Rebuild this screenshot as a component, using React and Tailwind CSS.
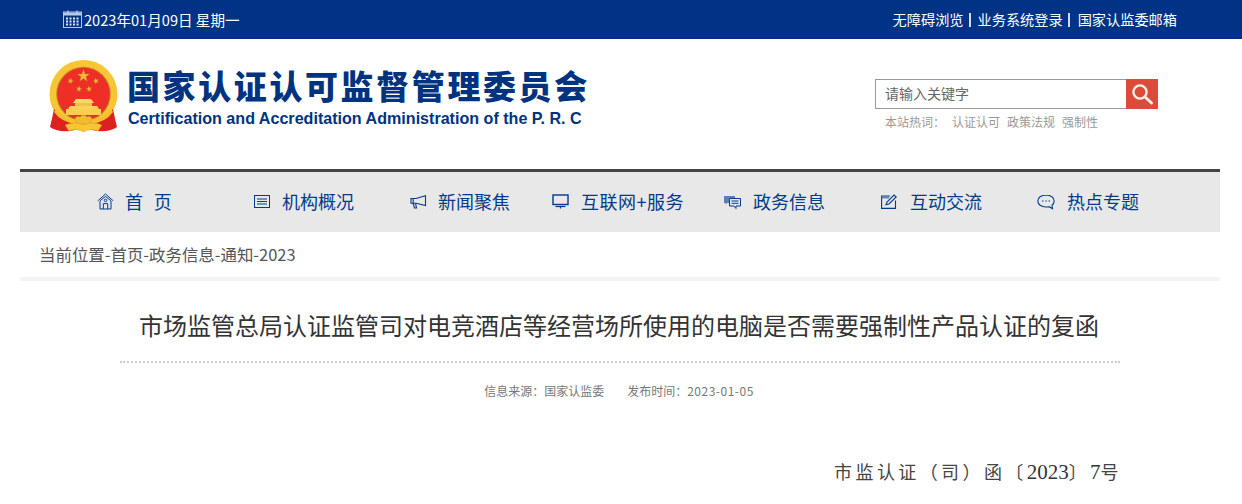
import React from "react";

function Emblem() {
  const star = (cx, cy, r, rot = 0) => {
    const pts = [];
    for (let i = 0; i < 10; i++) {
      const a = (Math.PI / 5) * i - Math.PI / 2 + rot;
      const rr = i % 2 === 0 ? r : r * 0.4;
      pts.push(`${(cx + rr * Math.cos(a)).toFixed(2)},${(cy + rr * Math.sin(a)).toFixed(2)}`);
    }
    return <polygon points={pts.join(" ")} fill="#f5b83a" stroke="#b9791c" strokeWidth="0.3" />;
  };
  return (
    <svg width="72" height="76" viewBox="0 0 72 76" className="shrink-0">
      <circle cx="35.5" cy="35" r="34" fill="#f8c534" />
      <circle cx="35.5" cy="35" r="27.3" fill="#c08a22" />
      <circle cx="35.5" cy="35" r="26.3" fill="#ee2f27" />
      {star(35.5, 17, 6.5)}
      {star(22.5, 22, 3.2, 0.3)}
      {star(48, 22, 3.2, -0.3)}
      {star(31, 30, 3.2, 0.2)}
      {star(41, 30, 3.2, -0.2)}
      <path d="M28 40 L43 40 L46 44 L25 44 Z" fill="#fbd768" />
      <rect x="27" y="44" width="17" height="3" fill="#f2c14a" />
      <path d="M22 47 H49 L51 50 H20 Z" fill="#fbd35a" />
      <rect x="18" y="50" width="35" height="6" fill="#fbcf4e" />
      <path d="M6 50 Q4 60 2 68 Q8 73 22 72 L31 70 L26 62 Q13 60 6 50 Z" fill="#dc211f" />
      <path d="M65 50 Q67 60 69 68 Q63 73 49 72 L40 70 L45 62 Q58 60 65 50 Z" fill="#dc211f" />
      <path d="M8 50 Q16 60 27 60 L31 63 L28 65 Q13 63 6 53 Z" fill="#f7bf2f" />
      <path d="M63 50 Q55 60 44 60 L40 63 L43 65 Q58 63 65 53 Z" fill="#f7bf2f" />
      <path d="M27 59 Q30 56 32 58 Q35.5 54 39 58 Q41 56 44 59 L42 65 L29 65 Z" fill="#f3bb2f" stroke="#c08a22" strokeWidth="0.4" />
      <path d="M17 66 Q26 62 35.5 66 Q45 62 54 66 L50 72 Q43 69 35.5 73 Q28 69 21 72 Z" fill="#f8c534" stroke="#c98f22" strokeWidth="0.3" />
    </svg>
  );
}

function Calendar() {
  return (
    <svg width="19" height="18" viewBox="0 0 19 18" fill="none" className="shrink-0">
      <rect x="0.5" y="2" width="18" height="15.5" stroke="#b9c8e4" />
      <rect x="1" y="2.5" width="17" height="3" fill="#b9c8e4" />
      <path d="M5 0.5V3M14 0.5V3" stroke="#dfe6f3" />
      {[7.5, 10.5, 13.5].map((y) =>
        [3, 6.5, 10, 13.5].map((x) => <rect key={`${x}-${y}`} x={x} y={y} width="2" height="2" fill="#dfe6f3" />)
      )}
    </svg>
  );
}

const c = "#003a8c";
const icons = {
  home: (
    <svg width="17" height="17" viewBox="0 0 17 17" fill="none" stroke={c} strokeWidth="1">
      <path d="M0.8 7.8 L8.5 1 L16.2 7.8" />
      <path d="M3 7.8 L8.5 3.4 L14 7.8" />
      <path d="M3 8 V16 H14 V8" />
      <circle cx="8.5" cy="7.4" r="1.3" />
      <path d="M6.3 16 V10.6 H10.7 V16" />
    </svg>
  ),
  list: (
    <svg width="16" height="13" viewBox="0 0 16 13" fill="none" stroke={c} strokeWidth="1">
      <rect x="0.5" y="0.5" width="15" height="12" />
      <path d="M3 4H13M3 6.5H13M3 9H13" />
    </svg>
  ),
  horn: (
    <svg width="17" height="14" viewBox="0 0 17 14" fill="none" stroke={c} strokeWidth="1.1">
      <path d="M1 3.5 H6 L15.5 0.8 V10.6 L6 8.2 H1 Z" />
      <path d="M3.2 3.5 V8.2 M3 8.2 L4.5 13 H6.5 L5.5 8.4" />
    </svg>
  ),
  screen: (
    <svg width="17" height="15" viewBox="0 0 17 15" fill="none" stroke={c}>
      <rect x="1" y="1" width="15" height="9.5" strokeWidth="1.4" />
      <path d="M3.5 12.5H13.5" strokeWidth="1.2" />
      <path d="M8.5 12.5V14.5" strokeWidth="1.2" />
    </svg>
  ),
  chat: (
    <svg width="17" height="14" viewBox="0 0 17 14" fill="none">
      <path d="M0 1H11V3H5V8H3L1.5 9.5V8H0Z" fill="#5b7fb8" />
      <path d="M5.5 3.5H16.5V11H12V13.5L10 11H5.5Z" stroke={c} fill="#e8e8e8" />
      <path d="M7.5 6H14.5M7.5 8.3H14.5" stroke={c} />
    </svg>
  ),
  edit: (
    <svg width="16" height="15" viewBox="0 0 16 15" fill="none" stroke={c} strokeWidth="1.1">
      <path d="M9 2H0.6V14.4H14.5V6.5" />
      <rect x="1" y="2.4" width="7" height="2" fill="#5b7fb8" stroke="none" />
      <path d="M5 10.8 L6 8 L13 1 L15.2 3 L8 10 Z" />
    </svg>
  ),
  bubble: (
    <svg width="18" height="16" viewBox="0 0 18 16" fill="none" stroke={c} strokeWidth="1.1">
      <path d="M9 1 C4.2 1 0.8 3.6 0.8 7 C0.8 10.4 4.2 13 9 13 C10 13 11 12.9 12 12.7 L15.5 14.8 L15 11.2 C16.4 10.1 17.2 8.7 17.2 7 C17.2 3.6 13.8 1 9 1 Z" />
      <circle cx="5.8" cy="7" r="0.7" fill={c} stroke="none" />
      <circle cx="9" cy="7" r="0.7" fill={c} stroke="none" />
      <circle cx="12.2" cy="7" r="0.7" fill={c} stroke="none" />
    </svg>
  ),
};

const nav = [
  ["home", "首 页", "w-[157px]", "gap-[11px]", "tracking-[3.4px]"],
  ["list", "机构概况", "w-[156px]", "gap-[12px]", ""],
  ["horn", "新闻聚焦", "w-[142px]", "gap-[11px]", ""],
  ["screen", "互联网+服务", "w-[172px]", "gap-[12px]", "tracking-[0.5px]"],
  ["chat", "政务信息", "w-[157px]", "gap-[12px]", ""],
  ["edit", "互动交流", "w-[156px]", "gap-[13px]", ""],
  ["bubble", "热点专题", "w-[160px]", "gap-[12px]", ""],
];

export default function App() {
  return (
    <div className="w-[1242px] h-[504px] overflow-hidden bg-white font-['Noto_Sans_CJK_SC',sans-serif]">
      <div className="h-[39px] bg-[#003386] text-white flex items-center justify-between pl-[63px] pr-[65px] text-[14.2px]">
        <div className="flex items-center gap-[2px]">
          <Calendar />
          <span className="text-[14.6px]">2023年01月09日 星期一</span>
        </div>
        <div className="flex items-center">
          <span>无障碍浏览</span>
          <span className="ml-[5px] mr-[7px] mt-[1px] w-[2px] h-[14px] bg-[#d5ddeb]" />
          <span>业务系统登录</span>
          <span className="ml-[5px] mr-[8px] mt-[1px] w-[2px] h-[14px] bg-[#d5ddeb]" />
          <span>国家认监委邮箱</span>
        </div>
      </div>

      <div className="h-[130px] flex items-start justify-between pl-[48px] pr-[84px]">
        <div className="flex items-start pt-[20px] gap-[7px]">
          <Emblem />
          <div className="pt-[6px] text-[#00337f]">
            <div className="text-[33px] leading-[40px] font-black tracking-[2.6px] whitespace-nowrap">国家认证认可监督管理委员会</div>
            <div className="font-['Liberation_Sans',sans-serif] font-bold text-[16.1px] leading-[20px] mt-[3px] ml-[1px] whitespace-nowrap">
              Certification and Accreditation Administration of the P. R. C
            </div>
          </div>
        </div>
        <div className="pt-[40px] w-[283px]">
          <div className="flex h-[30px]">
            <div className="flex-1 border border-[#999] border-r-0 text-[14px] text-[#666] pl-[9px] leading-[27px]">请输入关键字</div>
            <div className="w-[32px] bg-[#dc4a3a] flex items-center justify-center">
              <svg width="24" height="24" viewBox="0 0 24 24" fill="none">
                <circle cx="10" cy="10" r="6.6" stroke="#fdf0e8" strokeWidth="2.4" />
                <path d="M15 15 L21.5 21" stroke="#fdf0e8" strokeWidth="3" strokeLinecap="round" />
              </svg>
            </div>
          </div>
          <div className="pl-[10px] mt-[4px] text-[12px] leading-[18px] text-[#999] whitespace-nowrap flex">
            <span className="w-[67px]">本站热词：</span>
            <span className="mr-[7px]">认证认可</span>
            <span className="mr-[7px]">政策法规</span>
            <span>强制性</span>
          </div>
        </div>
      </div>

      <div className="mx-[20px] w-[1200px]">
        <div className="h-[63px] bg-[#e8e8e8] border-t-[3px] border-[#444] flex items-center pl-[77px] pb-[1px] text-[#003a8c] text-[18px]">
          {nav.map(([icon, label, w, gap, track]) => (
            <div key={label} className={`${w} ${gap} flex items-center shrink-0 whitespace-pre`}>
              {icons[icon]}
              <span className={track}>{label}</span>
            </div>
          ))}
        </div>

        <div className="h-[49px] border-b-[4px] border-[#f3f3f3] pl-[19px] flex items-center text-[16.45px] text-[#555] pb-[1px]">
          当前位置-首页-政务信息-通知-2023
        </div>

        <div className="px-[100px]">
          <h1 className="pt-[26px] pr-[2px] h-[82px] border-b-2 border-dotted border-[#ccc] text-center text-[24px] leading-[36px] text-[#333] font-normal whitespace-nowrap">
            市场监管总局认证监管司对电竞酒店等经营场所使用的电脑是否需要强制性产品认证的复函
          </h1>
          <div className="flex justify-center gap-[23px] mt-[19px] pr-[2px] text-[12px] leading-[18px] text-[#777]">
            <span>信息来源：国家认监委</span>
            <span>发布时间：<span className="tracking-[0.5px]">2023-01-05</span></span>
          </div>
          <div className="mt-[54px] -mr-[2px] text-right text-[18px] leading-[36px] tracking-[3.4px] text-[#444] font-['Liberation_Serif','Noto_Sans_CJK_SC',serif]">
            市监认证（司）函〔<span className="text-[21px] tracking-normal text-[#333]">2023</span>〕<span className="text-[21px] tracking-normal text-[#333]">7</span>号
          </div>
        </div>
      </div>
    </div>
  );
}
